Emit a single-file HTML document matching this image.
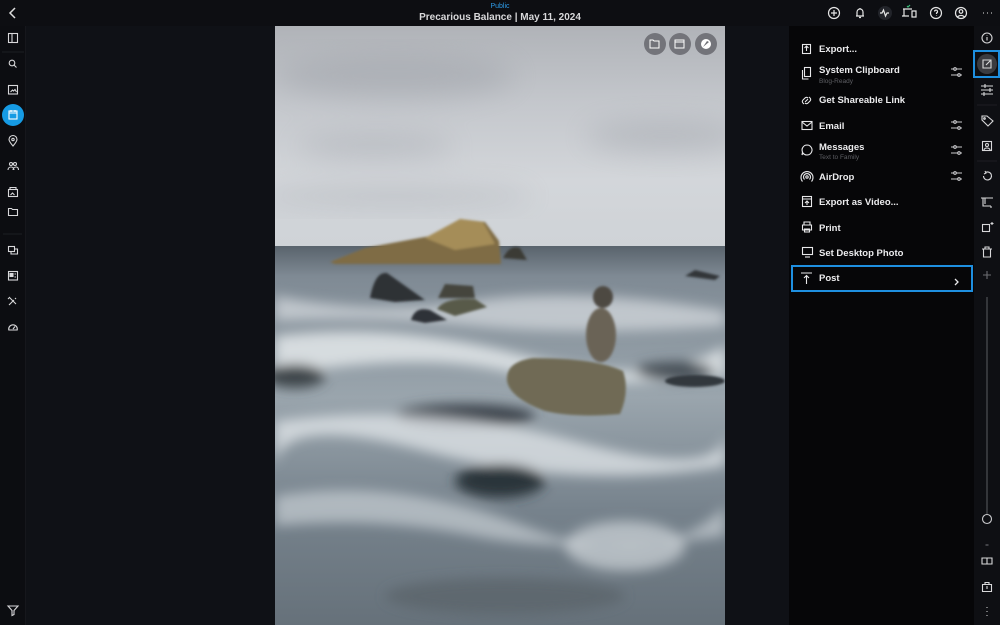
<!DOCTYPE html>
<html><head><meta charset="utf-8"><style>
*{margin:0;padding:0;box-sizing:border-box}
body{width:1000px;height:625px;background:#0f1116;font-family:"Liberation Sans",sans-serif;position:relative;overflow:hidden;color:#e8e8ea}
.abs{position:absolute}
.top{left:0;top:0;width:1000px;height:26px;background:#0d0e12}
.left{left:0;top:26px;width:26px;height:599px;background:#0c0d11;border-right:1px solid #16171c}
.menu{left:789px;top:26px;width:185px;height:599px;background:#060608}
.rs{left:974px;top:26px;width:26px;height:599px;background:#0e0f13}
.mi{position:absolute;left:819px;font-size:9.5px;font-weight:bold;color:#ececee;white-space:nowrap}
.sub{position:absolute;left:819px;font-size:6.5px;color:#5e5f64}
svg.i{position:absolute;overflow:visible}
</style></head><body>
<div class="abs top"></div>
<div class="abs left"></div>
<div class="abs menu"></div>
<div class="abs rs"></div>

<div class="abs" style="left:0;width:1000px;top:3px;text-align:center;font-size:7px;color:#2e9be8">Public</div>
<div class="abs" style="left:0;width:1000px;top:12px;text-align:center;font-size:10px;font-weight:bold;color:#d8d8da">Precarious Balance | May 11, 2024</div>

<svg class="i" style="left:8px;top:7px" width="10" height="12"><path d="M7 1 L2 6 L7 11" stroke="#ddd" stroke-width="1.5" fill="none"/></svg>

<svg class="i" style="left:0;top:0" width="1000" height="26" fill="none" stroke="#e6e6e6" stroke-width="1.2">
<circle cx="834" cy="13" r="5.5"/><path d="M834 10v6M831 13h6"/>
<path d="M856 16h8M857 16v-4a3 3 0 0 1 6 0v4M860 8v1M859 17.5h2"/>
<circle cx="885" cy="13" r="7" fill="#22242a" stroke="none"/><path d="M880 13h2l1.5-3 2 6 1.5-3h2"/>
<path d="M903 9h9M904 9v7h5M902 16h7M912 11h4v6h-4z"/><path d="M907 6l1 1 2-2" stroke="#3bbf7a"/>
<circle cx="936" cy="13" r="5.5"/><path d="M934.5 11.5a1.5 1.5 0 1 1 2 1.5v1M936.5 15.5v.5"/>
<circle cx="961" cy="13" r="5.5"/><circle cx="961" cy="11.5" r="1.8"/><path d="M957.5 17a4 3 0 0 1 7 0"/>
<path d="M983 13h.5M987 13h.5M991 13h.5" stroke-width="2"/>
</svg>

<svg class="i" style="left:0;top:26px" width="26" height="599" fill="none" stroke="#d8d8da" stroke-width="1.1">
<rect x="8.5" y="7.5" width="9" height="9"/><path d="M12 7.5v9"/>
<line x1="2" y1="26" x2="24" y2="26" stroke="#1d1e23"/>
<circle cx="12" cy="37" r="2.8"/><path d="M14 39l2.5 2.5"/>
<rect x="8.5" y="59.5" width="9" height="8.5"/><path d="M10.5 66l2-2 1 1 1.5-1.5 1.5 2.5"/>
<circle cx="13" cy="89" r="11" fill="#169be4" stroke="none"/>
<rect x="9" y="85" width="8" height="8" stroke="#fff"/><path d="M9 87h8M11 84v2M15 84v2" stroke="#fff"/>
<path d="M13 120c-3-3.5-4-5-4-6.5a4 4 0 0 1 8 0c0 1.5-1 3-4 6.5z"/><circle cx="13" cy="113.5" r="1.2"/>
<circle cx="11" cy="138" r="1.5"/><circle cx="15" cy="138" r="1.5"/><path d="M8 144c0-2 1.5-3 3-3s3 1 3 3M13 144c0-2 1.5-3 3-3s2.5 1 2.5 3"/>
<rect x="8.5" y="163.5" width="9" height="7"/><path d="M10 163.5v-2h6v2M10.5 169l2-2 2 2"/>
<path d="M8.5 189.5v-7h3l1 1h5v6z"/>
<line x1="3" y1="208" x2="22" y2="208" stroke="#1d1e23"/>
<rect x="8.5" y="220.5" width="6" height="5"/><path d="M11 225.5v2.5h6.5v-5h-3"/>
<rect x="8.5" y="245.5" width="9" height="8.5"/><rect x="10" y="247.5" width="3" height="3" fill="#d8d8da"/><path d="M14.5 248h1.5M14.5 251h1.5"/>
<path d="M9 279l5-5M10 272l6 6M15 272l1 1M8 273l2-2"/>
<path d="M8.8 304a4.3 4.3 0 1 1 8.4 0z"/><path d="M13 303l2-2.5"/>
<path d="M8 580h10l-4 4.5v4l-2 1v-5z"/>
</svg>

<svg class="abs" style="left:275px;top:26px" width="450" height="599" viewBox="0 0 450 599">
<defs>
<linearGradient id="sky" x1="0" y1="0" x2="0" y2="1">
<stop offset="0" stop-color="#b0b3b8"/><stop offset=".35" stop-color="#c4c7cc"/><stop offset=".7" stop-color="#d3d6da"/><stop offset="1" stop-color="#cfd3d7"/></linearGradient>
<linearGradient id="sea" x1="0" y1="0" x2="0" y2="1">
<stop offset="0" stop-color="#59636c"/><stop offset=".08" stop-color="#7f8a94"/><stop offset=".4" stop-color="#9aa5ad"/><stop offset=".7" stop-color="#76828c"/><stop offset="1" stop-color="#66717a"/></linearGradient>
<filter id="b"><feGaussianBlur stdDeviation="6"/></filter>
<filter id="bs"><feGaussianBlur stdDeviation="14"/></filter>
<filter id="b2"><feGaussianBlur stdDeviation="1.2"/></filter>
</defs>
<rect width="450" height="221" fill="url(#sky)"/>
<g filter="url(#bs)" fill="#9a9ea5" opacity=".45">
<ellipse cx="120" cy="50" rx="120" ry="22"/><ellipse cx="100" cy="120" rx="80" ry="10"/><ellipse cx="390" cy="110" rx="80" ry="14"/><ellipse cx="120" cy="170" rx="140" ry="8"/></g>
<rect y="220" width="450" height="379" fill="url(#sea)"/>
<g filter="url(#b)">
<path d="M0 270 Q100 290 200 275 T450 285 L450 300 Q300 310 200 300 T0 295z" fill="#e6eaed" opacity=".6"/>
<path d="M0 310 Q120 295 250 330 T450 320 L450 350 Q320 365 230 345 T0 350z" fill="#eef1f3" opacity=".75"/>
<ellipse cx="190" cy="390" rx="70" ry="12" fill="#3c454d"/>
<path d="M0 395 Q150 375 300 415 T450 405 L450 440 Q300 465 150 425 T0 445z" fill="#e8ecef" opacity=".7"/>
<ellipse cx="225" cy="455" rx="45" ry="17" fill="#2c343a"/>
<path d="M0 470 Q120 450 250 500 T450 480 L450 510 Q300 530 200 510 T0 500z" fill="#dfe4e7" opacity=".55"/>
<ellipse cx="350" cy="520" rx="60" ry="25" fill="#dfe4e7" opacity=".6"/>
<ellipse cx="20" cy="350" rx="30" ry="12" fill="#3d444a"/>
<ellipse cx="400" cy="345" rx="40" ry="9" fill="#444d55"/>
<ellipse cx="230" cy="570" rx="120" ry="18" fill="#59626a" opacity=".7"/>
</g>
<g filter="url(#b2)">
<path d="M55 236 L90 222 L155 210 L185 193 L210 196 L224 215 L226 238 L60 238z" fill="#7f6c45"/>
<path d="M150 212 L185 193 L208 196 L220 218 L180 224z" fill="#a58d58"/>
<path d="M228 232 Q235 218 245 222 L252 234z" fill="#3a3a36"/>
<path d="M95 272 Q100 245 112 247 L150 274 L120 276z" fill="#2f3234"/>
<path d="M170 258 L198 260 L200 272 L163 272z" fill="#45443e"/>
<path d="M162 283 Q170 271 200 273 L212 281 L180 290z" fill="#585a4a"/>
<path d="M136 294 Q140 280 155 284 L172 294 L150 297z" fill="#2e3338"/>
<path d="M410 250 L420 244 L445 250 L440 254z" fill="#303438"/>
<ellipse cx="328" cy="271" rx="10" ry="11" fill="#4d4843"/>
<ellipse cx="326" cy="309" rx="15" ry="27" fill="#6b6356"/>
<path d="M232 355 Q230 336 258 332 Q320 332 348 345 Q355 365 345 388 Q300 392 270 385 Q235 372 232 355z" fill="#6f6a55"/>
<ellipse cx="420" cy="355" rx="30" ry="6" fill="#33383d"/>
</g>
<g fill="#6e6f75" opacity=".92">
<circle cx="380" cy="18" r="11"/><circle cx="405" cy="18" r="11"/><circle cx="431" cy="18" r="11"/></g>
<g fill="none" stroke="#fff" stroke-width="1">
<path d="M375 14h3l1 1h5v7h-9z"/><rect x="400" y="14" width="9" height="8"/><path d="M400 16h9"/>
</g>
<circle cx="431" cy="18" r="5" fill="#fff"/><path d="M428 21l4-6 2 1z" fill="#6e6f75"/>
</svg>

<svg class="i" style="left:0;top:0" width="1000" height="625" fill="none" stroke="#e8e8ea" stroke-width="1.1">
<rect x="802.5" y="44.5" width="8" height="9"/><path d="M806.5 51v-5M804.5 48l2-2 2 2"/>
<rect x="804.5" y="67.5" width="6" height="9"/><path d="M802.5 70v9h6"/>
<path d="M804 104l-1-1a2 2 0 0 1 0-3l2-2a2 2 0 0 1 3 0M809 97l1 1a2 2 0 0 1 0 3l-2 2a2 2 0 0 1-3 0M805 102l3-3"/>
<rect x="802" y="121.5" width="10" height="8"/><path d="M802 122l5 4 5-4"/>
<path d="M807 145a5 5 0 1 1-4 8l-1 2 .5-3a5 5 0 0 1 4.5-7z"/>
<circle cx="807" cy="177" r="1.2"/><path d="M804.5 179.5a3.5 3.5 0 1 1 5 0M802.5 181.5a6 6 0 1 1 9 0"/>
<rect x="802.5" y="196.5" width="9" height="10"/><path d="M802.5 199h9M807 205v-4M805 203l2-2 2 2"/>
<path d="M804 225v-3h6v3M802.5 225h9v5h-9zM804.5 229h5v3h-5z"/>
<rect x="802.5" y="247.5" width="10" height="7"/><path d="M805 257h5"/>
<path d="M801 273h11M806.5 284v-8M804 278l2.5-2.5 2.5 2.5"/>
<path d="M955 285l3-3-3-3" stroke-width="1.3"/>
<g stroke="#c9c9cc">
<path d="M951 69h11M951 75h11"/><circle cx="955" cy="69" r="1.3" fill="#060608"/><circle cx="959" cy="75" r="1.3" fill="#060608"/>
<path d="M951 122h11M951 128h11"/><circle cx="955" cy="122" r="1.3" fill="#060608"/><circle cx="959" cy="128" r="1.3" fill="#060608"/>
<path d="M951 147h11M951 153h11"/><circle cx="955" cy="147" r="1.3" fill="#060608"/><circle cx="959" cy="153" r="1.3" fill="#060608"/>
<path d="M951 173h11M951 179h11"/><circle cx="955" cy="173" r="1.3" fill="#060608"/><circle cx="959" cy="179" r="1.3" fill="#060608"/>
</g>
<rect x="792" y="266" width="180" height="25" stroke="#1e8fe0" stroke-width="2"/>
</svg>
<div class="mi" style="top:44px">Export...</div>
<div class="mi" style="top:65px">System Clipboard</div><div class="sub" style="top:78px">Blog-Ready</div>
<div class="mi" style="top:95px">Get Shareable Link</div>
<div class="mi" style="top:121px">Email</div>
<div class="mi" style="top:142px">Messages</div><div class="sub" style="top:154px">Text to Family</div>
<div class="mi" style="top:172px">AirDrop</div>
<div class="mi" style="top:197px">Export as Video...</div>
<div class="mi" style="top:223px">Print</div>
<div class="mi" style="top:248px">Set Desktop Photo</div>
<div class="mi" style="top:273px">Post</div>

<svg class="i" style="left:0;top:0" width="1000" height="625" fill="none" stroke="#d8d8da" stroke-width="1.1">
<circle cx="987" cy="38" r="5"/><path d="M987 37v3.5M987 35.5v.5"/>
<circle cx="987" cy="64" r="10" fill="#3a3b40" stroke="none"/>
<rect x="974" y="51" width="25" height="26" stroke="#1e8fe0" stroke-width="2"/>
<path d="M988 60h-5v8h8v-5M986 65l5-5M988 60h3v3"/>
<path d="M981 86h12M981 90h12M981 94h12"/><path d="M985 84v4M990 88v4M984 92v4"/>
<line x1="977" y1="105" x2="997" y2="105" stroke="#1d1e23"/>
<path d="M982 116v4l6 6 5-5-6-5z"/><circle cx="984.5" cy="118.5" r=".8"/>
<rect x="982.5" y="141.5" width="9" height="9"/><circle cx="987" cy="145" r="1.5"/><path d="M984 150a3 2 0 0 1 6 0"/>
<line x1="977" y1="161" x2="997" y2="161" stroke="#1d1e23"/>
<path d="M983.5 176a4 4 0 1 0 2-3.5M985 171l1 2-2 1"/>
<path d="M983 198v8h8M985 204v-6h8M981 198h4M991 206v2"/>
<rect x="982.5" y="224.5" width="7" height="7"/><path d="M992 222v3M990.5 223.5h3"/>
<path d="M982 249h10M983.5 249v8h7v-8M985 249v-2h4v2"/>
<path d="M987 271v8M983 275h8" stroke="#6c6d72"/>
<line x1="987" y1="297" x2="987" y2="514" stroke="#55565b"/>
<circle cx="987" cy="519" r="4.5" stroke="#c9c9cc"/>
<path d="M985.5 545h3" stroke="#6c6d72"/>
<path d="M982 558h10v6h-10z M987 558v6"/>
<path d="M982.5 584.5h9v7h-9z M985 584.5v-2h4v2 M987 586v3"/>
<path d="M987 607v.5M987 611v.5M987 615v.5" stroke-width="2"/>
</svg>
</body></html>
